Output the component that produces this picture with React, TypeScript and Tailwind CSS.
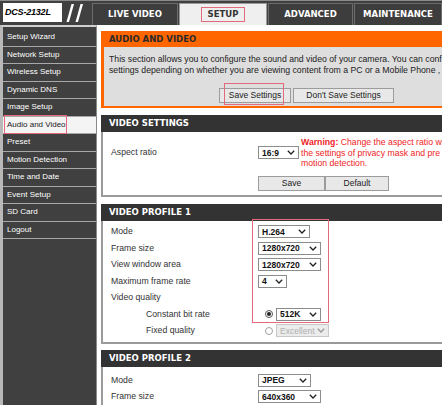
import React from "react";

const HEAD = "font-['DejaVu_Sans',Verdana,sans-serif] font-bold text-[8.5px]";

function Chevron({ color = "#222" }: { color?: string }) {
  return (
    <svg width="8" height="5" viewBox="0 0 8 5" className="shrink-0">
      <polyline points="0.8,0.8 4,4 7.2,0.8" fill="none" stroke={color} strokeWidth="1.3" />
    </svg>
  );
}

function Sel({ value, w, disabled }: { value: string; w: string; disabled?: boolean }) {
  return (
    <div
      className={`${w} h-[13px] flex items-center justify-between pl-[3px] pr-[3px] border text-[8.5px] leading-none ${
        disabled
          ? "border-[#c8c8c8] bg-[#ececec] text-[#b0b0b0] font-normal"
          : "border-[#8c8c8c] bg-white text-[#111] font-bold"
      }`}
    >
      <span>{value}</span>
      <Chevron color={disabled ? "#9a9a9a" : "#222"} />
    </div>
  );
}

function Btn({ label, w }: { label: string; w: string }) {
  return (
    <div
      className={`${w} h-[15px] flex items-center justify-center bg-[#e8e8e8] border border-[#9c9c9c] text-[8.5px] text-[#222]`}
    >
      {label}
    </div>
  );
}

function Radio({ checked }: { checked?: boolean }) {
  return (
    <div
      className={`w-[8px] h-[8px] rounded-full border flex items-center justify-center bg-white ${
        checked ? "border-[#555]" : "border-[#a0a0a0]"
      }`}
    >
      {checked && <div className="w-[4px] h-[4px] rounded-full bg-[#222]" />}
    </div>
  );
}

function Row({ label, indent, children }: { label: string; indent?: boolean; children?: React.ReactNode }) {
  return (
    <div className="flex items-center h-[16.5px]">
      <div className={`w-[155px] shrink-0 ${indent ? "pl-[43px]" : "pl-[8px]"} text-[8.7px] text-[#333] whitespace-nowrap`}>
        {label}
      </div>
      {children}
    </div>
  );
}

function Header({ title }: { title: string }) {
  return (
    <div className={`h-[17px] bg-[#333333] text-white flex items-center pl-[8px] ${HEAD}`}>{title}</div>
  );
}

function Tab({ label, w, active }: { label: string; w: string; active?: boolean }) {
  return (
    <div
      className={`${w} h-[22px] flex items-center justify-center border border-b-0 ${HEAD} ${
        active ? "bg-[#efefef] border-[#9a9a9a] text-[#333]" : "bg-[#3d3d3d] border-[#6c6c6c] text-white"
      }`}
    >
      {active ? (
        <span className="border border-[#e26a7c] px-[6px] h-[15px] flex items-center">{label}</span>
      ) : (
        label
      )}
    </div>
  );
}

const menu = [
  "Setup Wizard",
  "Network Setup",
  "Wireless Setup",
  "Dynamic DNS",
  "Image Setup",
  "Audio and Video",
  "Preset",
  "Motion Detection",
  "Time and Date",
  "Event Setup",
  "SD Card",
  "Logout",
];

export default function App() {
  return (
    <div className="w-[442px] h-[405px] overflow-hidden bg-white flex flex-col font-['Liberation_Sans',Arial,sans-serif] text-[8px] text-[#222]">
      {/* Top bar */}
      <div className="h-[25px] shrink-0 bg-[#404040] flex items-end border-t border-[#8a8a8a]">
        <div className="self-start mt-[2px] ml-[3px] w-[59px] h-[19px] bg-white flex items-center pl-[2px]">
          <span className="font-bold italic text-[9px] text-black tracking-[-0.2px]">DCS-2132L</span>
        </div>
        <svg width="22" height="20" viewBox="0 0 22 20" className="self-center ml-[3px]">
          <polygon points="6.5,1 9,1 4,19 1.5,19" fill="#fff" />
          <polygon points="15.5,1 18,1 13,19 10.5,19" fill="#fff" />
        </svg>
        <div className="flex ml-[5px] gap-[1px]">
          <Tab label="LIVE VIDEO" w="w-[86px]" />
          <Tab label="SETUP" w="w-[88px]" active />
          <Tab label="ADVANCED" w="w-[85px]" />
          <Tab label="MAINTENANCE" w="w-[88px]" />
        </div>
      </div>

      <div className="flex flex-1 min-h-0">
        {/* Sidebar */}
        <div className="w-[97px] shrink-0 bg-[#404040] border-l-[3px] border-l-[#b8b8b8] border-r border-r-[#8a8a8a] border-t-2 border-t-[#cfcfcf] pt-[2px]">
          {menu.map((m) => {
            const active = m === "Audio and Video";
            return (
              <div
                key={m}
                className={`relative h-[17.5px] flex items-center pl-[4px] border-b border-[#a8a8a8] text-[8px] ${
                  active ? "bg-[#f4f4f4] text-[#222]" : "text-white"
                }`}
              >
                {m}
                {active && (
                  <div className="absolute left-[1px] top-[-2px] w-[63px] h-[19px] border border-[#e26a7c]" />
                )}
              </div>
            );
          })}
        </div>

        {/* Content */}
        <div className="flex-1 min-w-0 pl-[4px]">
          <div className="w-[406px] flex flex-col">
            {/* Audio and video */}
            <div className="mt-[6px]">
              <div className={`h-[16px] bg-[#ff6600] text-[#2a2a2a] flex items-center pl-[8px] ${HEAD}`}>
                AUDIO AND VIDEO
              </div>
              <div className="relative bg-[#dedede] border-l-[3px] border-r-[3px] border-b-2 border-[#ff6600] pl-[5px] pt-[7px] pb-[3px]">
                <div className="whitespace-nowrap leading-[11px] text-[8.7px] text-[#222]">
                  This section allows you to configure the sound and video of your camera. You can configure
                  <br />
                  settings depending on whether you are viewing content from a PC or a Mobile Phone , and
                </div>
                <div className="flex justify-center gap-[2px] mt-[12px]">
                  <Btn label="Save Settings" w="w-[72px]" />
                  <Btn label="Don't Save Settings" w="w-[101px]" />
                </div>
                <div className="absolute left-[120px] top-[36px] w-[60px] h-[22px] border border-[#e26a7c]" />
              </div>
            </div>

            {/* Video settings */}
            <div className="mt-[7px]">
              <Header title="VIDEO SETTINGS" />
              <div className="border-l-2 border-r-2 border-b-2 border-[#9a9a9a] pt-[5px] pb-[4px]">
                <div className="flex items-center">
                  <div className="w-[155px] shrink-0 pl-[8px] text-[8.7px] text-[#333]">Aspect ratio</div>
                  <Sel value="16:9" w="w-[41px]" />
                  <div className="ml-[2px] whitespace-nowrap leading-[10.5px] text-[8.7px] text-[#ee1c25]">
                    <span className="font-bold">Warning:</span> Change the aspect ratio will
                    <br />
                    the settings of privacy mask and pre
                    <br />
                    motion detection.
                  </div>
                </div>
                <div className="flex pl-[155px] mt-[7px]">
                  <Btn label="Save" w="w-[67px]" />
                  <Btn label="Default" w="w-[64px]" />
                </div>
              </div>
            </div>

            {/* Video profile 1 */}
            <div className="relative mt-[7px]">
              <Header title="VIDEO PROFILE 1" />
              <div className="border-l-2 border-r-2 border-b-2 border-[#9a9a9a] pt-[3px] pb-[3px]">
                <Row label="Mode">
                  <Sel value="H.264" w="w-[52px]" />
                </Row>
                <Row label="Frame size">
                  <Sel value="1280x720" w="w-[63px]" />
                </Row>
                <Row label="View window area">
                  <Sel value="1280x720" w="w-[63px]" />
                </Row>
                <Row label="Maximum frame rate">
                  <Sel value="4" w="w-[29px]" />
                </Row>
                <Row label="Video quality" />
                <Row label="Constant bit rate" indent>
                  <div className="ml-[7px] mr-[3px]">
                    <Radio checked />
                  </div>
                  <Sel value="512K" w="w-[45px]" />
                </Row>
                <Row label="Fixed quality" indent>
                  <div className="ml-[7px] mr-[3px]">
                    <Radio />
                  </div>
                  <Sel value="Excellent" w="w-[53px]" disabled />
                </Row>
              </div>
              <div className="absolute left-[151px] top-[15.5px] w-[77px] h-[104px] border border-[#e26a7c]" />
            </div>

            {/* Video profile 2 */}
            <div className="mt-[6px]">
              <Header title="VIDEO PROFILE 2" />
              <div className="border-l-2 border-r-2 border-[#9a9a9a] pt-[5px] pb-[3px]">
                <Row label="Mode">
                  <Sel value="JPEG" w="w-[53px]" />
                </Row>
                <Row label="Frame size">
                  <Sel value="640x360" w="w-[63px]" />
                </Row>
              </div>
            </div>
          </div>
        </div>
      </div>
    </div>
  );
}
